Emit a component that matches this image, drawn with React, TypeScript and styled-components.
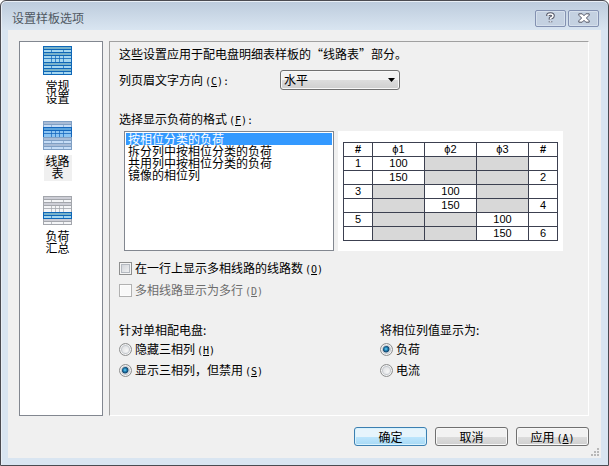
import React, { useState } from "react";
import styled, { createGlobalStyle } from "styled-components";

const Global = createGlobalStyle`
  * { box-sizing: border-box; }
  html, body, #root { height: 100%; }
  body {
    margin: 0;
    background: #fff;
    color: #000;
    font: 12px/16px "Noto Sans CJK SC", sans-serif;
  }
  button, select, input { font: inherit; color: inherit; margin: 0; }
`;

const Window = styled.main`
  display: flex;
  flex-direction: column;
  height: 100%;
  padding: 0 7px 7px;
  border: 1px solid #4b4b51;
  border-radius: 6px 6px 0 0;
  background: linear-gradient(#bccbdc 0, #d9e5f1 29px, #d9e5f1 100%);
  box-shadow: inset 0 1px #e9eff6, inset 1px 0 #e9eff6;
`;

const TitleBar = styled.header`
  display: flex;
  flex: none;
  align-items: center;
  height: 29px;
  padding: 5px 2px 0 4px;
  gap: 2px;
`;

const Title = styled.h1`
  flex: 1;
  margin: 0;
  color: #4f5862;
  font-size: 12px;
  font-weight: 400;
`;

const CaptionButton = styled.button`
  display: grid;
  place-items: center;
  width: 31px;
  height: 17px;
  padding: 0;
  border: 1px solid #8391b1;
  border-radius: 2px;
  background: #c4d1e1;
  box-shadow: inset 0 0 0 1px #d6e0ec;
`;

const Body = styled.div`
  display: flex;
  flex: 1;
  flex-direction: column;
  min-height: 0;
  background: #f0f0f0;
`;

const Columns = styled.div`
  display: flex;
  flex: 1;
  gap: 6px;
  padding: 11px 12px 0 11px;
`;

const Sidebar = styled.nav`
  display: flex;
  flex: none;
  flex-direction: column;
  align-items: center;
  gap: 15px;
  width: 84px;
  padding: 4px 7px 0 0;
  border: 1px solid #828790;
  background: #fff;
`;

const NavButton = styled.button`
  display: flex;
  flex-direction: column;
  align-items: center;
  gap: 5px;
  padding: 0;
  border: 0;
  background: none;
`;

const NavLabel = styled.span<{ $active: boolean }>`
  width: 28px;
  height: 26px;
  padding: 0 2px;
  background: ${(p) => (p.$active ? "#f0f0f0" : "transparent")};
  line-height: 12px;
`;

const Panel = styled.section`
  flex: 1;
  min-width: 0;
  padding: 4px 9px 0;
  border: 1px solid;
  border-color: #a0a0a0 #fff #fff #a0a0a0;
`;

const Text = styled.p`
  margin: 0;
`;

const Keys = styled.span`
  margin-left: 2px;
  font-family: "DejaVu Sans Mono", monospace;
  font-size: 10px;
  line-height: 10px;
`;

const SelectRow = styled.div`
  display: grid;
  grid-template-columns: 161px 120px;
  align-items: center;
  margin: 8px 0 21px;
`;

const FieldLabel = styled.label`
  display: block;
`;

const SelectFrame = styled.div`
  display: grid;
  align-items: center;
  > * { grid-area: 1 / 1; }
  > svg { justify-self: end; margin-right: 5px; pointer-events: none; }
`;

const Select = styled.select`
  appearance: none;
  width: 100%;
  height: 20px;
  padding: 0 3px;
  border: 1px solid #707070;
  border-radius: 3px;
  background: linear-gradient(#f2f2f2 0 50%, #dddddd 50%, #cfcfcf);
  box-shadow: inset 0 0 0 1px #f8f8f8;
`;

const Preview = styled.div`
  display: flex;
  gap: 4px;
  margin: 4px 16px 9px 5px;
`;

const List = styled.select`
  flex: 1;
  min-width: 0;
  height: 120px;
  padding: 1px;
  border: 1px solid #828790;
  border-radius: 0;
  outline: 0;
  background: #fff;
  overflow: hidden;
  option {
    display: flex;
    align-items: center;
    min-height: 12px;
    height: 12px;
    padding: 0 2px 2px;
    line-height: 12px;
  }
  option:checked {
    background: #3399ff linear-gradient(#3399ff, #3399ff);
    color: #fff;
  }
`;

const Sheet = styled.div`
  flex: none;
  width: 225px;
  padding: 11px 5px 10px;
  background: #fff;
`;

const Table = styled.table`
  width: 100%;
  border-collapse: collapse;
  table-layout: fixed;
  font: 11px/13px "Liberation Sans", sans-serif;
  text-align: center;
`;

const Cell = styled.td<{ $muted?: boolean; $strong?: boolean }>`
  height: 14px;
  padding: 0;
  border: 1px solid #3c4050;
  background: ${(p) => (p.$muted ? "#d8d8d8" : "#fff")};
  font-weight: ${(p) => (p.$strong ? 700 : 400)};
`;

const NumberCol = styled.col`
  width: 29px;
`;

const Choice = styled.label<{ $disabled?: boolean }>`
  display: flex;
  align-items: center;
  gap: 3px;
  height: 16px;
  color: ${(p) => (p.$disabled ? "#6d6d6d" : "#000")};
`;

const Checks = styled.div`
  display: grid;
  gap: 6px;
`;

const CheckBox = styled.input`
  appearance: none;
  width: 13px;
  height: 13px;
  border: 1px solid #8e8f8f;
  background: linear-gradient(135deg, #cbcfd5, #f6f6f6);
  box-shadow: inset 0 0 0 1px #f4f4f4, inset 0 0 0 2px #b4b9c0;
  &:checked { background: #2d6fa8; }
  &:disabled {
    border-color: #b1b1b1;
    background: #f8f8f8;
    box-shadow: inset 0 0 0 1px #fcfcfc;
  }
`;

const Radio = styled.input`
  appearance: none;
  width: 13px;
  height: 13px;
  border: 1px solid #8e8f8f;
  border-radius: 50%;
  background: radial-gradient(circle at 60% 60%, #f6f6f6, #cdd0d5);
  box-shadow: inset 0 0 0 1px #f4f4f4, inset 0 0 0 2px #c4c8cd;
  &:checked {
    background: radial-gradient(circle at 5px 5px, #8fe0fb 0, #2c9cd0 1px, #12456e 3px, #12456e 3px, #e4e8ec 4px);
  }
`;

const Groups = styled.div`
  display: grid;
  grid-template-columns: 261px 1fr;
  margin-top: 24px;
`;

const Group = styled.fieldset`
  display: grid;
  gap: 5px;
  margin: 0;
  padding: 0;
  border: 0;
`;

const Legend = styled.legend`
  padding: 0;
  margin-bottom: 3px;
`;

const Footer = styled.footer`
  display: flex;
  flex: none;
  justify-content: flex-end;
  align-items: flex-start;
  gap: 8px;
  height: 42px;
  padding: 11px 2px 2px;
`;

const Button = styled.button<{ $primary?: boolean }>`
  width: 73px;
  height: 19px;
  padding: 0;
  border: 1px solid ${(p) => (p.$primary ? "#3c7fb1" : "#707070")};
  border-radius: 3px;
  background: ${(p) =>
    p.$primary
      ? "linear-gradient(#e6f4fc 0 50%, #bee6fd 50%, #a7d9f5)"
      : "linear-gradient(#f2f2f2 0 50%, #dddddd 50%, #cfcfcf)"};
  box-shadow: inset 0 0 0 1px ${(p) => (p.$primary ? "#d8f2fd" : "#f8f8f8")};
  line-height: 16px;
`;

const Grip = styled.svg`
  align-self: flex-end;
  margin-left: -6px;
`;

type Tone = { line: string; band: string; cell: string };
const BRIGHT: Tone = { line: "#0e67b8", band: "#79b2ca", cell: "#a4d6ef" };
const FADED: Tone = { line: "#7f9fc4", band: "#a9bcd6", cell: "#c6ddf6" };
const BLUE: Tone = { line: "#1467bd", band: "#5ba3dc", cell: "#8cc4f2" };
const GREY: Tone = { line: "#a3a6ac", band: "#cdced6", cell: "#f4f5f7" };

function PanelIcon({ top, middle, lower, bottom }: { top: Tone; middle: Tone; lower: Tone; bottom: Tone }) {
  const section = (t: Tone, y: number, h: number, cuts: number[]) => (
    <g>
      <rect x="0" y={y} width="29" height={h} fill={t.line} />
      <rect x="1" y={y + 1} width="27" height="2" fill={t.band} />
      <rect x="1" y={y + 4} width="27" height={h - 5} fill={t.cell} />
      {cuts.map((x) => (
        <rect key={x} x={x} y={y + 4} width="1" height={h - 5} fill={t.line} opacity="0.7" />
      ))}
      {h > 8 && <rect x="1" y={y + 6} width="27" height="1" fill={t.line} opacity="0.8" />}
    </g>
  );
  return (
    <svg width="29" height="29" viewBox="0 0 29 29" shapeRendering="crispEdges" aria-hidden="true">
      {section(top, 0, 7, [8, 20])}
      {section(bottom, 22, 7, [8, 20])}
      {section(middle, 6, 11, [8, 12, 16, 20])}
      {section(lower, 16, 7, [8, 20])}
    </svg>
  );
}

const sections = [
  { name: ["常规", "设置"], icon: <PanelIcon top={BRIGHT} middle={BRIGHT} lower={BRIGHT} bottom={BRIGHT} /> },
  { name: ["线路", "表"], icon: <PanelIcon top={FADED} middle={BLUE} lower={FADED} bottom={FADED} /> },
  { name: ["负荷", "汇总"], icon: <PanelIcon top={GREY} middle={GREY} lower={BRIGHT} bottom={GREY} /> },
];

const formats = ["按相位分类的负荷", "拆分列中按相位分类的负荷", "共用列中按相位分类的负荷", "镜像的相位列"];

const rows = [
  ["1", "100", "", "", ""],
  ["", "150", "", "", "2"],
  ["3", "", "100", "", ""],
  ["", "", "150", "", "4"],
  ["5", "", "", "100", ""],
  ["", "", "", "150", "6"],
];

function Mnemonic({ letter, suffix = "" }: { letter: string; suffix?: string }) {
  return (
    <Keys>
      (<u>{letter}</u>){suffix}
    </Keys>
  );
}

export default function App() {
  const [active, setActive] = useState(1);
  return (
    <Window lang="zh-CN">
      <Global />
      <TitleBar>
        <Title>设置样板选项</Title>
        <CaptionButton aria-label="帮助">
          <svg width="9" height="12" viewBox="0 0 9 12" fill="none">
            <path d="M2 4V3.3Q2 2 4.5 2T7 3.7Q7 5 5.6 5.6T4.5 7.4M4.5 9.2v1" stroke="#535666" strokeWidth="3.6" />
            <path d="M2 3.8V3.3Q2 2 4.5 2T7 3.7Q7 5 5.6 5.6T4.5 7.2M4.5 9.2v1" stroke="#fff" strokeWidth="1.6" />
          </svg>
        </CaptionButton>
        <CaptionButton aria-label="关闭">
          <svg width="12" height="10" viewBox="0 0 12 10">
            <path
              d="M.8.8h3.4L6 2.7 7.8.8h3.4v1.4L8.4 5l2.8 2.8v1.4H7.8L6 7.3 4.2 9.2H.8V7.8L3.6 5 .8 2.2Z"
              fill="#fff"
              stroke="#535666"
            />
          </svg>
        </CaptionButton>
      </TitleBar>
      <Body>
        <Columns>
          <Sidebar>
            {sections.map((s, i) => (
              <NavButton key={s.name[0]} onClick={() => setActive(i)}>
                {s.icon}
                <NavLabel $active={i === active}>
                  {s.name[0]}
                  <br />
                  {s.name[1]}
                </NavLabel>
              </NavButton>
            ))}
          </Sidebar>
          <Panel>
            <Text>这些设置应用于配电盘明细表样板的“线路表”部分。</Text>
            <SelectRow>
              <FieldLabel htmlFor="direction">
                列页眉文字方向
                <Mnemonic letter="C" suffix=":" />
              </FieldLabel>
              <SelectFrame>
                <Select id="direction" defaultValue="水平">
                  <option>水平</option>
                  <option>垂直</option>
                </Select>
                <svg width="7" height="4" viewBox="0 0 7 4">
                  <path d="M0 0h7L3.5 4Z" />
                </svg>
              </SelectFrame>
            </SelectRow>
            <FieldLabel htmlFor="format">
              选择显示负荷的格式
              <Mnemonic letter="F" suffix=":" />
            </FieldLabel>
            <Preview>
              <List id="format" size={4} defaultValue={formats[0]}>
                {formats.map((f) => (
                  <option key={f}>{f}</option>
                ))}
              </List>
              <Sheet>
                <Table>
                  <colgroup>
                    <NumberCol />
                    <col span={3} />
                    <NumberCol />
                  </colgroup>
                  <thead>
                    <tr>
                      {["#", "ϕ1", "ϕ2", "ϕ3", "#"].map((h, i) => (
                        <Cell as="th" key={i} $strong={h === "#"}>
                          {h}
                        </Cell>
                      ))}
                    </tr>
                  </thead>
                  <tbody>
                    {rows.map((row, r) => (
                      <tr key={r}>
                        {row.map((value, c) => (
                          <Cell key={c} $muted={c > 0 && c < 4 && !value}>
                            {value}
                          </Cell>
                        ))}
                      </tr>
                    ))}
                  </tbody>
                </Table>
              </Sheet>
            </Preview>
            <Checks>
              <Choice>
                <CheckBox type="checkbox" />
                <span>
                  在一行上显示多相线路的线路数
                  <Mnemonic letter="O" />
                </span>
              </Choice>
              <Choice $disabled>
                <CheckBox type="checkbox" disabled />
                <span>
                  多相线路显示为多行
                  <Mnemonic letter="D" />
                </span>
              </Choice>
            </Checks>
            <Groups>
              <Group>
                <Legend>针对单相配电盘:</Legend>
                <Choice>
                  <Radio type="radio" name="phase" />
                  <span>
                    隐藏三相列
                    <Mnemonic letter="H" />
                  </span>
                </Choice>
                <Choice>
                  <Radio type="radio" name="phase" defaultChecked />
                  <span>
                    显示三相列，但禁用
                    <Mnemonic letter="S" />
                  </span>
                </Choice>
              </Group>
              <Group>
                <Legend>将相位列值显示为:</Legend>
                <Choice>
                  <Radio type="radio" name="value" defaultChecked />
                  负荷
                </Choice>
                <Choice>
                  <Radio type="radio" name="value" />
                  电流
                </Choice>
              </Group>
            </Groups>
          </Panel>
        </Columns>
        <Footer>
          <Button $primary>确定</Button>
          <Button>取消</Button>
          <Button>
            应用
            <Mnemonic letter="A" />
          </Button>
          <Grip width="8" height="8" viewBox="0 0 8 8" fill="#b8b8b8" aria-hidden="true">
            <path d="M6 0h2v2H6zM3 3h2v2H3zM6 3h2v2H6zM0 6h2v2H0zM3 6h2v2H3zM6 6h2v2H6z" />
          </Grip>
        </Footer>
      </Body>
    </Window>
  );
}
